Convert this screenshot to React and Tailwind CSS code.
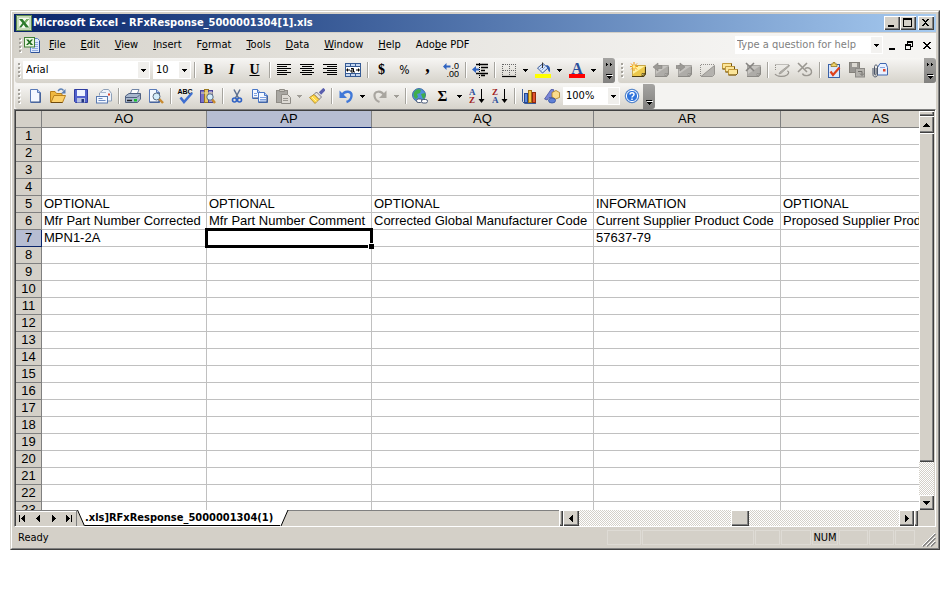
import React from "react";

const bevel =
  "bg-[#d4d0c8] shadow-[inset_1px_1px_0_#fff,inset_-1px_-1px_0_#404040,inset_-2px_-2px_0_#808080]";
const track =
  "bg-[conic-gradient(#d4d0c8_25%,#fff_0_50%,#d4d0c8_0_75%,#fff_0)] bg-[length:2px_2px]";

/* ---------- icons ---------- */

function Svg({ children, size = 16 }) {
  return (
    <svg width={size} height={size} viewBox="0 0 16 16" className="block shrink-0" aria-hidden="true">
      {children}
    </svg>
  );
}

const Page = ({ x, y, w, h, c = "#5a7ab8" }) => (
  <g>
    <path d={`M${x + 0.5} ${y + 0.5}h${w - 4}l3 3v${h - 4}h-${w - 1}z`} fill="#f4f8ff" stroke={c} />
    <path d={`M${x + w - 3.5} ${y + 0.5}v3h3`} fill="#b9cdf0" stroke={c} />
    <path d={`M${x + w - 1} ${y + 4}v${h - 5}h-${w - 2}`} fill="none" stroke="#3a5488" strokeWidth="1.2" />
  </g>
);

const Note = ({ top = "#fff0a0", fill = "#ecc84c", line = "#c8a84a", dark = "#4a3c14" }) => (
  <g>
    <path d="M2.5 3.5h13v8.500l-2.500 2.500H2.500z" fill={fill} stroke={line} />
    <path d="M3 4h12L3 12z" fill={top} />
    <path d="M2 14.500h11.500l2-2.500V5" stroke={dark} strokeWidth="1.200" fill="none" />
    <path d="M15 11.500h-3v2.500z" fill={top} stroke={dark} strokeWidth=".7" />
  </g>
);

const GrayNote = () => <Note top="#c6c4c0" fill="#aeaca8" line="#a8a6a2" dark="#8c8a86" />;

const lines = (rows) =>
  rows.map(([a, b], i) => <path key={i} d={`M${a} ${2.5 + i * 2}H${b}`} stroke="#000" />);

const icons = {
  excel: (
    <Svg>
      <rect x=".5" y=".5" width="15" height="15" fill="#e6f0dc" stroke="#5d8a4c" />
      <rect x="2" y="2" width="12" height="12" fill="#f3f8ee" stroke="#9fbf8c" />
      <path d="M3 4h3.500l2 2.600L10.800 4H13L9.600 8l3.600 4.500H9.700L7.600 9.600 5.300 12.500H3L6.400 8z" fill="#2c7a2c" />
      <path d="M11 4h2L9.600 8 8.500 6.600z" fill="#7fb56a" />
    </Svg>
  ),
  workbook: (
    <Svg>
      <path d="M6.500 1.500h7l2 2v12h-9z" fill="#dfeafc" stroke="#5b82c8" />
      <path d="M7 15.500h8.500V4" stroke="#2f5298" fill="none" />
      <path d="M8 11.500h6M8 13.500h6M11 5.500h3M11 7.500h3M11 9.500h3" stroke="#8fabdf" />
      <rect x=".5" y=".5" width="10" height="9.500" fill="#e9f5df" stroke="#3f7f35" />
      <path d="M2 2.500h2.500l1.200 1.600L7.200 2.500H9L6.600 5.200 9.200 8H6.700L5.400 6.400 3.900 8H2l2.600-2.800z" fill="#1d6b1d" />
    </Svg>
  ),
  alignLeft: <Svg>{lines([[1, 15], [1, 11], [1, 15], [1, 11], [1, 15], [1, 11]])}</Svg>,
  alignCenter: <Svg>{lines([[1, 15], [3, 13], [1, 15], [3, 13], [1, 15], [3, 13]])}</Svg>,
  alignRight: <Svg>{lines([[1, 15], [5, 15], [1, 15], [5, 15], [1, 15], [5, 15]])}</Svg>,
  merge: (
    <Svg>
      <rect x=".5" y="1.500" width="15" height="13" fill="#c3d6f0" stroke="#355a94" />
      <path d="M0 4.500h16M0 11.500h16M5.500 1v3M10.500 1v3M5.500 12v3M10.500 12v3" stroke="#355a94" />
      <rect x="1" y="5" width="14" height="6" fill="#fff" />
      <path d="M2 8h3M11 8h3" stroke="#000" />
      <path d="M3 6v4L1 8zM13 6v4l2-2z" />
      <path d="M6 6.500h2.500v3.500h-2.500v-2h2.500M9 10h1" stroke="#000" fill="none" />
    </Svg>
  ),
  indent: (
    <Svg>
      <path d="M4 2.500h12M9 5.500h7M9 8.500h4M4 11.500h12M9 13.500h4" stroke="#000" strokeWidth="1.300" />
      <path d="M7.500 1v15" stroke="#000" strokeDasharray="1 1" />
      <path d="M0 7.500 4 4v2.500h3v2H4V11z" fill="#2f63c0" />
    </Svg>
  ),
  borders: (
    <Svg>
      <path d="M1.500 2v12M14.500 2v12M8.500 2v12M2 2.500h13M2 8.500h13" stroke="#666" strokeDasharray="1 1" fill="none" />
      <path d="M1 14.500h14" stroke="#000" strokeWidth="1.200" />
    </Svg>
  ),
  fill: (
    <Svg>
      <rect y="12" width="16" height="4" fill="#ff0" />
      <path d="M2.500 6 8 1.500 13 6 7.500 11z" fill="#dce8fb" stroke="#3a5c9c" />
      <path d="M5 7l4-4M6.500 8.500l4-4" stroke="#88a8dd" />
      <path d="M7.500 6V.5" stroke="#333" />
      <path d="M11 3c3 0 4.500 2 4 7-1.600-.4-2.200-2-2.400-4z" fill="#2f5cb0" />
    </Svg>
  ),
  folderNote: (
    <Svg>
      <Note />
      <path d="M4 0v9M0 4.500h8M1 1.500l6 6M7 1.500l-6 6" stroke="#f39a15" />
      <circle cx="4" cy="4.500" r="1.500" fill="#fff08a" />
    </Svg>
  ),
  notePrev: (
    <Svg>
      <GrayNote />
      <path d="M0 5l5-4v2.500h4v3H5V9z" fill="#9c9a96" stroke="#878581" strokeWidth=".6" />
    </Svg>
  ),
  noteNext: (
    <Svg>
      <GrayNote />
      <path d="M9 5 4 1v2.500H0v3h4V9z" fill="#9c9a96" stroke="#878581" strokeWidth=".6" />
    </Svg>
  ),
  noteShow: (
    <Svg>
      <path d="M15 4v8.500L13 14.500H2z" fill="#b4b2ae" />
      <path d="M1.500 14V2.500H15" fill="none" stroke="#8f8d89" strokeDasharray="1 1" />
      <path d="M2 14.500 15.500 3.500v9l-2 2z" fill="none" stroke="#979591" />
    </Svg>
  ),
  notesAll: (
    <Svg>
      {[[0.5, 1.5], [3.5, 4.5], [6.5, 7.5]].map(([x, y]) => (
        <g key={x}>
          <path d={`M${x} ${y}h9v4l-1.500 1.500h-7.500z`} fill="#fbe59a" stroke="#c39a3c" />
          <path d={`M${x} ${y + 5.5}h7.500l1.500-1.500v-4`} fill="none" stroke="#6e5418" />
        </g>
      ))}
    </Svg>
  ),
  noteDelete: (
    <Svg>
      <GrayNote />
      <path d="M1 1l8 8M9 1L1 9" stroke="#858380" strokeWidth="1.600" />
    </Svg>
  ),
  ink: (
    <Svg>
      <path d="M1.500 2.500h13v3M1.500 3v5" stroke="#8f8c86" fill="none" strokeDasharray="1 1" />
      <path d="M15 3 6 10l-1 2 2-.6L15.500 4z" fill="#b5b2ac" stroke="#98958f" strokeWidth=".7" />
      <path d="M1 12c2 3 9 3 12 1 2.500-2 2-4 0-4" fill="none" stroke="#98958f" strokeWidth="1.200" />
    </Svg>
  ),
  inkDelete: (
    <Svg>
      <path d="M1 1l9 9M10 1L1 10" stroke="#9a9791" strokeWidth="1.600" />
      <path d="M8 6.500c4-2 7 1 6.500 4-1 4-8 4-9 1" fill="none" stroke="#9a9791" strokeWidth="1.400" />
    </Svg>
  ),
  task: (
    <Svg>
      <rect x="2.500" y="2.500" width="11" height="13" fill="#dbe8fd" stroke="#3b62a8" />
      <path d="M5 3.500V2h2V.5h2V2h2v2.500H5z" fill="#efd36c" stroke="#8a6a10" strokeWidth=".7" />
      <path d="M4.500 9.500 7 13l6.500-7.500" fill="none" stroke="#e0401c" strokeWidth="2.200" />
    </Svg>
  ),
  saveOff: (
    <Svg>
      <rect x=".5" y=".5" width="10" height="10" fill="#989692" stroke="#84817b" />
      <rect x="3" y="1" width="5" height="4" fill="#dcd9d2" />
      <rect x="6.500" y="6.500" width="9" height="8.500" fill="#b4b2ad" stroke="#8c8a86" />
      <path d="M9 9.500h4v3M13 13.500l-2-2M13 13.500l2-2" stroke="#6f6d69" fill="none" />
    </Svg>
  ),
  attach: (
    <Svg>
      <path d="M5.500 5.500 8 1.500h6l1.500 4v7.500h-10z" fill="#e8f0ff" stroke="#3f67b0" />
      <path d="M8 5.500h5" stroke="#8aa8de" />
      <rect x="11" y="7" width="2.500" height="2.500" fill="#e0442a" />
      <path d="M1 6v6.500c0 3.200 4.500 3.200 4.500 0v-8c0-2-3-2-3 0V12c0 1.200 1.600 1.200 1.600 0V6" fill="none" stroke="#4b5568" />
    </Svg>
  ),
  new: <Svg><Page x={3} y={1} w={11} h={14} /></Svg>,
  open: (
    <Svg>
      <path d="M.5 14.500v-11h4.500l1.500 2h5.500v2.500" fill="#f0b840" stroke="#b8801c" />
      <path d="M1 14.500 4 7.500h11.500l-3 7z" fill="#fcd06a" stroke="#b8801c" />
      <path d="M1 14.500h11.500" stroke="#6e4a10" />
      <path d="M8 3c2-2.500 4-2.500 5.500-.5" fill="none" stroke="#5a7fb5" strokeWidth="1.400" />
      <path d="M15.500 1v4.500H11z" fill="#5a7fb5" />
    </Svg>
  ),
  save: (
    <Svg>
      <path d="M1.500 1.500h13v13h-12l-1-1z" fill="#5262cc" stroke="#2f3ca0" />
      <rect x="4" y="2" width="8" height="6" fill="#eef3ff" />
      <rect x="4" y="10" width="8" height="4.500" fill="#b8c2e2" />
      <rect x="8.500" y="11" width="2.500" height="3.500" fill="#22357e" />
    </Svg>
  ),
  mail: (
    <Svg>
      <path d="M3.500 7.500V5l4-3.500h5l3 4v7.500h-4" fill="#eef3fb" stroke="#8fa0b8" />
      <rect x="12" y="5.500" width="2" height="2" fill="#e0442a" />
      <path d="M5 4.500h5" stroke="#a8b8d0" />
      <rect x=".5" y="8.500" width="11" height="6.500" fill="#f4f8ff" stroke="#5878b0" />
      <path d="M2.500 10.500h4M2.500 12.500h7" stroke="#6d8cc4" />
    </Svg>
  ),
  print: (
    <Svg>
      <path d="M5 6.500 7 1.500h7l-2 5z" fill="#fff" stroke="#7286a8" />
      <path d="M.5 8 4 5.500h11.500V11l-3 3.500H.5z" fill="#a9b8ce" stroke="#4f6080" />
      <path d="M1 9.500h11l3-3" stroke="#4f6080" fill="none" />
      <path d="M2 12.500h5" stroke="#222" strokeWidth="1.500" />
      <rect x="9" y="11" width="3" height="2.500" fill="#18c030" />
    </Svg>
  ),
  preview: (
    <Svg>
      <Page x={1} y={1} w={11} h={14} />
      <circle cx="8.500" cy="8.500" r="3.500" fill="#d3ecfb" stroke="#5b6b80" />
      <path d="M11.200 11 15 15" stroke="#c88a30" strokeWidth="2.500" />
    </Svg>
  ),
  spell: (
    <Svg>
      <text x="8" y="6" fontSize="7" fontWeight="700" textAnchor="middle" fontFamily="Liberation Sans, sans-serif">ABC</text>
      <path d="M3.500 9.500 7 14l8-9" fill="none" stroke="#3f6fd0" strokeWidth="2.600" />
    </Svg>
  ),
  research: (
    <Svg>
      <rect x=".5" y="2.500" width="4" height="12" fill="#7a72c8" stroke="#4a4494" />
      <rect x="4.500" y="1.500" width="4" height="13" fill="#e8c868" stroke="#9a7a20" />
      <rect x="8.500" y="2.500" width="4" height="12" fill="#9a93d8" stroke="#4a4494" />
      <path d="M1 5h12" stroke="#e8dca0" />
      <circle cx="10" cy="9" r="3.200" fill="#d3ecfb" stroke="#5b6b80" />
      <path d="M12.300 11.500 15 15" stroke="#c88a30" strokeWidth="2.400" />
    </Svg>
  ),
  cut: (
    <Svg>
      <path d="M5 1.500 9.500 10M11 1.500 6.500 10" stroke="#5d7090" strokeWidth="1.500" />
      <circle cx="5.500" cy="12" r="2" fill="none" stroke="#2f62c4" strokeWidth="1.600" />
      <circle cx="10.500" cy="12" r="2" fill="none" stroke="#2f62c4" strokeWidth="1.600" />
    </Svg>
  ),
  copy: (
    <Svg>
      <Page x={0} y={1} w={9} h={10} c="#4a78c8" />
      <Page x={6} y={4} w={10} h={11} c="#4a78c8" />
      <path d="M8 9.500h6M8 11.500h6M8 13h6M2 5.500h3M2 7.500h3" stroke="#7da0e0" />
    </Svg>
  ),
  paste: (
    <Svg>
      <rect x="1.500" y="2.500" width="11" height="12" fill="#a9a7a2" stroke="#8f8c86" />
      <path d="M4.500 3.500v-2h5v2z" fill="#c8c5be" stroke="#8f8c86" />
      <path d="M6.500 6.500h6l3 3v6h-9z" fill="#dedbd5" stroke="#8f8c86" />
      <path d="M8 10.500h5M8 12.500h5" stroke="#9a9791" />
    </Svg>
  ),
  brush: (
    <Svg>
      <path d="M15.500 1 11 5.500" stroke="#5a5fae" strokeWidth="3.200" />
      <path d="M7.500 4 12.500 9l-2.500 2.500L5 6.500z" fill="#e6e2da" stroke="#5a5a70" strokeWidth=".8" />
      <path d="M5 6.500 10 11.500 6 15.500.5 9.500z" fill="#ffd84a" stroke="#a8801c" strokeWidth=".8" />
      <path d="M3 9l4.500 4.500" stroke="#fff2a8" />
    </Svg>
  ),
  undo: (
    <Svg>
      <path d="M4 7c3-5 10-4 9.500 1-.3 3-2 5-5 6" fill="none" stroke="#4078d8" strokeWidth="2.400" />
      <path d="M1.500 2.500v7.500H9z" fill="#4078d8" />
    </Svg>
  ),
  redo: (
    <Svg>
      <path d="M12 7c-3-5-10-4-9.500 1 .3 3 2 5 5 6" fill="none" stroke="#a9a6a0" strokeWidth="2.200" />
      <path d="M14.500 2.500v7.500H7z" fill="#a9a6a0" />
    </Svg>
  ),
  globe: (
    <Svg>
      <circle cx="7" cy="7" r="6.500" fill="#4f8fdc" stroke="#2a5a98" strokeWidth=".8" />
      <path d="M3 3c2-2 4-2 6-1L8 5 5 6l1 3-2 2C1 9 1 5 3 3zM9 6l4-1c1 3 0 5-2 6z" fill="#3fae4a" />
      <rect x="4.500" y="11" width="5.500" height="3.500" rx="1.700" fill="#fff" stroke="#4a5a78" />
      <rect x="9.500" y="11.500" width="6" height="3.500" rx="1.700" fill="#fff" stroke="#4a5a78" />
    </Svg>
  ),
  chart: (
    <Svg>
      <path d="M1.500 1v12.500l2 2H15" fill="none" stroke="#3a5c9c" />
      <rect x="3.500" y="5.500" width="3" height="9" fill="#5a8ae0" stroke="#27478f" />
      <rect x="7.500" y="2.500" width="3" height="12" fill="#f5c542" stroke="#a07010" />
      <rect x="11.500" y="4.500" width="3" height="10" fill="#e2552f" stroke="#8f2a10" />
    </Svg>
  ),
  drawing: (
    <Svg>
      <path d="M.5 11 7 1.500h2.500L11 12H8.500L8 9.500H5L3 12z" fill="#7a86d8" stroke="#3c4899" strokeWidth=".7" />
      <path d="M8 4.500 12 2.500l3.500 2v5l-4 1.500L8 9z" fill="#fbdc8c" stroke="#a87a1c" strokeWidth=".8" />
      <ellipse cx="8" cy="12.500" rx="3.500" ry="2.500" fill="#5f80d6" stroke="#2e4ea0" strokeWidth=".8" />
    </Svg>
  ),
  help: (
    <Svg>
      <circle cx="8" cy="8" r="6.800" fill="#2f74dc" stroke="#5a88c8" />
      <circle cx="8" cy="8" r="5.600" fill="none" stroke="#fff" />
      <path d="M6 6.500c0-2.500 4-2.500 4 0 0 1.500-2 1.500-2 3M8 10.500v1.500" fill="none" stroke="#fff" strokeWidth="1.500" />
    </Svg>
  ),
};

/* ---------- toolbar parts ---------- */

const Down = ({ color = "#000" }) => (
  <svg width="5" height="3" viewBox="0 0 5 3" className="block shrink-0" aria-hidden="true" shapeRendering="crispEdges">
    <path d="M0 0h5v1H4v1H3v1H2V2H1V1H0z" fill={color} />
  </svg>
);

const Tri = ({ d, bar }) => (
  <svg width="9" height="9" viewBox="0 0 9 9" className="block" aria-hidden="true" shapeRendering="crispEdges">
    <path d={d} />
    {bar && <path d={bar} />}
  </svg>
);
const UP = "M4 3h1v1h1v1h1v1h1v1H1V6h1V5h1V4h1z";
const DOWN = "M1 3h7v1H7v1H6v1H5v1H4V6H3V5H2V4H1z";
const LEFT = "M6 1v7H5V7H4V6H3V5H2V4h1V3h1V2h1V1z";
const RIGHT = "M3 1v7h1V7h1V6h1V5h1V4H6V3H5V2H4V1z";

const Grip = () => (
  <svg width="8" height="16" viewBox="0 0 8 16" className="block shrink-0" aria-hidden="true" shapeRendering="crispEdges">
    {[1, 5, 9, 13].map((y) => (
      <g key={y}>
        <rect x="4" y={y + 1} width="2" height="2" fill="#fff" />
        <rect x="3" y={y} width="2" height="2" fill="#a5a29b" />
      </g>
    ))}
  </svg>
);

const Sep = () => (
  <div className="flex h-4 w-[6px] shrink-0 justify-center">
    <div className="w-px bg-[#a6a49e] shadow-[1px_0_0_#fff]" />
  </div>
);

const Btn = ({ label, children }) => (
  <button type="button" aria-label={label} className="flex h-[22px] w-[23px] shrink-0 items-center justify-center">
    {children}
  </button>
);

const Split = ({ label, off, children }) => (
  <div className="flex shrink-0">
    <Btn label={label}>{children}</Btn>
    <button type="button" aria-label={`${label} options`} className="flex h-[22px] w-[11px] items-center justify-center">
      <Down color={off ? "#a09d97" : "#000"} />
    </button>
  </div>
);

const Combo = ({ label, value, className }) => (
  <label className={`relative flex h-[18px] shrink-0 bg-white ${className}`}>
    <select aria-label={label} defaultValue={value} className="w-full appearance-none bg-transparent pl-[3px] text-[11px] leading-4 outline-none">
      <option>{value}</option>
    </select>
    <span className="pointer-events-none absolute top-px right-px bottom-px flex w-[11px] items-center justify-center bg-[#f0efec]">
      <Down />
    </span>
  </label>
);

const MoreTab = ({ chevrons }) => (
  <button
    type="button"
    aria-label="Toolbar options"
    className="-mb-px flex h-[25px] w-3 shrink-0 items-center justify-center rounded-r-[3px] bg-linear-to-b from-[#a5a4a2] to-[#82817f]"
  >
    <svg width="8" height="19" viewBox="0 0 8 19" shapeRendering="crispEdges" aria-hidden="true">
      {chevrons && <path d="M1 2h1v1h1v1H2v1H1zM5 2h1v1h1v1H6v1H5z" />}
      <path d="M1 13h6v1H1zM2 15h5v1H6v1H5v1H4v-1H3v-1H2z" fill="#000" />
      <path d="M2 14h6v1H2z" fill="#fff" />
    </svg>
  </button>
);

const Glyph = ({ children, className = "" }) => (
  <span className={`font-['Liberation_Serif',serif] leading-4 font-bold ${className}`}>{children}</span>
);

const SortIcon = ({ top, bottom, a, b }) => (
  <Svg>
    <text x="0" y="7" fontSize="9" fontWeight="700" fill={a} fontFamily="Liberation Serif, serif">{top}</text>
    <text x="0" y="15" fontSize="9" fontWeight="700" fill={b} fontFamily="Liberation Serif, serif">{bottom}</text>
    <path d="M12.500 1v12" stroke="#000" />
    <path d="M9.500 11h6l-3 4z" />
  </Svg>
);

const bar = "flex h-[25px] items-center rounded-[3px] bg-linear-to-b from-[#f7f6f4] to-[#d6d3cb] pb-px";

function Formatting() {
  return (
    <div className={bar}>
      <Grip />
      <Combo label="Font" value="Arial" className="w-[127px]" />
      <Combo label="Font size" value="10" className="ml-[3px] w-[38px]" />
      <Sep />
      <Btn label="Bold"><Glyph className="text-[14px]">B</Glyph></Btn>
      <Btn label="Italic"><Glyph className="text-[14px] italic">I</Glyph></Btn>
      <Btn label="Underline"><Glyph className="text-[14px] underline">U</Glyph></Btn>
      <Sep />
      <Btn label="Align left">{icons.alignLeft}</Btn>
      <Btn label="Center">{icons.alignCenter}</Btn>
      <Btn label="Align right">{icons.alignRight}</Btn>
      <Btn label="Merge and center">{icons.merge}</Btn>
      <Sep />
      <Btn label="Currency style"><Glyph className="text-[14px]">$</Glyph></Btn>
      <Btn label="Percent style"><span className="text-[12px]">%</span></Btn>
      <Btn label="Comma style"><Glyph className="pb-2 text-[18px]">,</Glyph></Btn>
      <Btn label="Increase decimal">
        <Svg>
          <path d="M0 4.500 3.500 1v2.500h4v2h-4V8z" fill="#2f63c0" />
          <text x="16" y="7" fontSize="9" textAnchor="end" fontFamily="Liberation Sans, sans-serif">.0</text>
          <text x="16" y="15" fontSize="9" textAnchor="end" fontFamily="Liberation Sans, sans-serif">.00</text>
        </Svg>
      </Btn>
      <Sep />
      <Btn label="Decrease indent">{icons.indent}</Btn>
      <Sep />
      <Split label="Borders">{icons.borders}</Split>
      <Split label="Fill color">{icons.fill}</Split>
      <Split label="Font color">
        <Svg>
          <text x="8" y="12" fontSize="16" fontWeight="700" textAnchor="middle" fill="#2b4f9c" fontFamily="Liberation Serif, serif">A</text>
          <rect y="12" width="16" height="4" fill="#f00" />
        </Svg>
      </Split>
      <div className="w-1" />
      <MoreTab chevrons />
    </div>
  );
}

function Reviewing() {
  return (
    <div className={`${bar} min-w-0 flex-1`}>
      <Grip />
      <Btn label="New comment">{icons.folderNote}</Btn>
      <Btn label="Previous comment">{icons.notePrev}</Btn>
      <Btn label="Next comment">{icons.noteNext}</Btn>
      <Btn label="Show comment">{icons.noteShow}</Btn>
      <Btn label="Show all comments">{icons.notesAll}</Btn>
      <Btn label="Delete comment">{icons.noteDelete}</Btn>
      <Sep />
      <Btn label="Show ink">{icons.ink}</Btn>
      <Btn label="Delete ink">{icons.inkDelete}</Btn>
      <Sep />
      <Btn label="Create task">{icons.task}</Btn>
      <Btn label="Update file">{icons.saveOff}</Btn>
      <Btn label="Send as attachment">{icons.attach}</Btn>
      <div className="flex-1" />
      <MoreTab chevrons />
    </div>
  );
}

function Standard() {
  return (
    <div className={bar}>
      <Grip />
      <Btn label="New">{icons.new}</Btn>
      <Btn label="Open">{icons.open}</Btn>
      <Btn label="Save">{icons.save}</Btn>
      <Btn label="E-mail">{icons.mail}</Btn>
      <Sep />
      <Btn label="Print">{icons.print}</Btn>
      <Btn label="Print preview">{icons.preview}</Btn>
      <Sep />
      <Btn label="Spelling">{icons.spell}</Btn>
      <Btn label="Research">{icons.research}</Btn>
      <Sep />
      <Btn label="Cut">{icons.cut}</Btn>
      <Btn label="Copy">{icons.copy}</Btn>
      <Split label="Paste" off>{icons.paste}</Split>
      <Btn label="Format painter">{icons.brush}</Btn>
      <Sep />
      <Split label="Undo">{icons.undo}</Split>
      <Split label="Redo" off>{icons.redo}</Split>
      <Sep />
      <Btn label="Insert hyperlink">{icons.globe}</Btn>
      <Split label="AutoSum">
        <Glyph className="text-[15px]">Σ</Glyph>
      </Split>
      <Btn label="Sort ascending"><SortIcon top="A" bottom="Z" a="#2b4f9c" b="#a02020" /></Btn>
      <Btn label="Sort descending"><SortIcon top="Z" bottom="A" a="#a02020" b="#2b4f9c" /></Btn>
      <Sep />
      <Btn label="Chart wizard">{icons.chart}</Btn>
      <Btn label="Drawing">{icons.drawing}</Btn>
      <Combo label="Zoom" value="100%" className="w-[57px]" />
      <Btn label="Help">{icons.help}</Btn>
      <MoreTab />
    </div>
  );
}

/* ---------- title and menu ---------- */

const windowButtons = [
  ["Minimize", "M4 9h6v2H4z"],
  ["Maximize", "M3 2h9v9H3zM4 4v6h7V4z"],
  ["Close", "M4 3h2v1h1v1h1V4h1V3h2v1h-1v1H9v1H8v1h1v1h1v1h1v1H9V9H8V8H7v1H6v1H4V9h1V8h1V7h1V6H6V5H5V4H4z"],
];

function TitleBar() {
  return (
    <header className="flex h-[18px] items-center bg-linear-to-r from-[#0a246a] to-[#a6caf0] pr-0.5 pl-0.5">
      {icons.excel}
      <h1 className="ml-px flex-1 text-[11px] leading-4 font-bold whitespace-nowrap text-white">
        Microsoft Excel - RFxResponse_5000001304[1].xls
      </h1>
      {windowButtons.map(([label, d], i) => (
        <button key={label} type="button" aria-label={label} className={`h-[14px] w-4 ${bevel} ${i === 2 ? "ml-0.5" : ""}`}>
          <svg width="16" height="14" viewBox="0 0 16 14" shapeRendering="crispEdges" aria-hidden="true">
            <path d={d} fillRule="evenodd" />
          </svg>
        </button>
      ))}
    </header>
  );
}

const menus = [
  ["", "F", "ile"],
  ["", "E", "dit"],
  ["", "V", "iew"],
  ["", "I", "nsert"],
  ["F", "o", "rmat"],
  ["", "T", "ools"],
  ["", "D", "ata"],
  ["", "W", "indow"],
  ["", "H", "elp"],
  ["Ado", "b", "e PDF"],
];

const mdiButtons = [
  ["Minimize workbook", "M3 8h6v2H3z"],
  ["Restore workbook", "M3 1h6v6H7V6h1V3H4v1H3zM1 4h6v6H1zM2 6v3h4V6z"],
  ["Close workbook", "M1 2h2v1h1v1h2V3h1V2h2v1H8v1H7v1H6v1h1v1h1v1h1v1H7V8H6V7H4v1H3v1H1V8h1V7h1V6h1V5H3V4H2V3H1z"],
];

function MenuBar() {
  return (
    <nav className="mt-px flex h-[25px] items-center bg-linear-to-r from-[#d6d3cb] to-[#f5f4f2] to-80% pb-px pl-0.5">
      <Grip />
      {icons.workbook}
      <div className="flex flex-1 pl-px">
        {menus.map(([a, u, b]) => (
          <button key={u + b} type="button" className="pr-[7px] pl-2 text-[11px] leading-4 whitespace-nowrap">
            {a}
            <span className="underline">{u}</span>
            {b}
          </button>
        ))}
      </div>
      <div className="flex h-[18px] w-[148px] items-center bg-white">
        <input
          type="text"
          aria-label="Type a question for help"
          placeholder="Type a question for help"
          className="min-w-0 flex-1 pl-[2px] text-[11px] leading-4 outline-none placeholder:text-[#808080]"
        />
        <button type="button" aria-label="Recent questions" className="mr-px flex h-4 w-[11px] items-center justify-center bg-[#f3f2f0]">
          <Down />
        </button>
      </div>
      <div className="flex gap-2 pr-1 pl-[3px]">
        {mdiButtons.map(([label, d]) => (
          <button key={label} type="button" aria-label={label}>
            <svg width="10" height="11" viewBox="0 0 10 11" className="block" shapeRendering="crispEdges" aria-hidden="true">
              <path d={d} fillRule="evenodd" />
            </svg>
          </button>
        ))}
      </div>
    </nav>
  );
}

/* ---------- sheet ---------- */

const columns = ["AO", "AP", "AQ", "AR", "AS"];
const cells = {
  5: ["OPTIONAL", "OPTIONAL", "OPTIONAL", "INFORMATION", "OPTIONAL"],
  6: [
    "Mfr Part Number Corrected",
    "Mfr Part Number Comment",
    "Corrected Global Manufacturer Code",
    "Current Supplier Product Code",
    "Proposed Supplier Product Code",
  ],
  7: ["MPN1-2A", "", "", "57637-79", ""],
};
const active = { row: 7, col: 1 };
const rows = Array.from({ length: 23 }, (_, i) => i + 1);

const head = "h-[17px] border-r border-b p-0 text-center font-normal";
const headOff = "border-[#808080] bg-[#d4d0c8]";

function Grid() {
  return (
    <div className="min-w-0 flex-1 overflow-hidden bg-white">
      <table className="w-[965px] table-fixed border-separate border-spacing-0 font-['Liberation_Sans',Arial,sans-serif] text-[13px] leading-4">
        <colgroup>
          <col className="w-[26px]" />
          <col className="w-[165px]" />
          <col className="w-[165px]" />
          <col className="w-[222px]" />
          <col className="w-[187px]" />
          <col className="w-[200px]" />
        </colgroup>
        <thead>
          <tr>
            <td className={`${head} ${headOff}`} />
            {columns.map((name, c) => (
              <th
                key={name}
                scope="col"
                className={`${head} ${c === active.col ? "border-r-[#808080] border-b-[#0a246a] bg-[#b6bdd2]" : headOff}`}
              >
                {name}
              </th>
            ))}
          </tr>
        </thead>
        <tbody>
          {rows.map((r) => (
            <tr key={r}>
              <th
                scope="row"
                className={`${head} ${r === active.row ? "border-[#0a246a] bg-[#b6bdd2]" : headOff}`}
              >
                {r}
              </th>
              {columns.map((name, c) => (
                <td key={name} className="relative h-[17px] border-r border-b border-[#c0c0c0] p-0 pl-0.5 whitespace-nowrap">
                  {cells[r]?.[c]}
                  {r === active.row && c === active.col && (
                    <span className="absolute -top-0.5 -right-0.5 -bottom-0.5 -left-0.5 z-10 border-3 border-black">
                      <span className="absolute -right-1 -bottom-1 size-[6px] border-t border-l border-white bg-black" />
                    </span>
                  )}
                </td>
              ))}
            </tr>
          ))}
        </tbody>
      </table>
    </div>
  );
}

function VerticalScroll() {
  return (
    <div className="mr-px flex w-[15px] shrink-0 flex-col bg-[#d4d0c8]">
      <div className={`h-[5px] ${bevel}`} />
      <button type="button" aria-label="Scroll up" className={`flex h-[17px] items-center justify-center ${bevel}`}>
        <Tri d={UP} />
      </button>
      <div className={`flex-1 ${track}`}>
        <div className={`h-[91%] ${bevel}`} />
      </div>
      <button type="button" aria-label="Scroll down" className={`flex h-[15px] items-center justify-center ${bevel}`}>
        <Tri d={DOWN} />
      </button>
    </div>
  );
}

const navButtons = [
  ["First sheet", "M6 1v7H5V7H4V6H3V5H2V4h1V3h1V2h1V1z", "M0 1h1v7H0z"],
  ["Previous sheet", LEFT],
  ["Next sheet", RIGHT],
  ["Last sheet", "M2 1v7h1V7h1V6h1V5h1V4H5V3H4V2H3V1z", "M7 1h1v7H7z"],
];

function SheetTabs() {
  return (
    <div className="flex h-4">
      <div className="flex w-[543px] shrink-0 border-t border-[#808080]">
        <div className="flex border-r border-[#808080]">
          {navButtons.map(([label, d, b]) => (
            <button key={label} type="button" aria-label={label} className="flex h-[15px] w-[15px] items-center justify-center shadow-[inset_0_1px_0_#fff]">
              <Tri d={d} bar={b} />
            </button>
          ))}
        </div>
        <button type="button" className="-mt-px flex h-4 text-[11px] leading-4 font-bold whitespace-nowrap">
          <svg width="8" height="16" viewBox="0 0 8 16" className="block" aria-hidden="true">
            <path d="M0 0h8v16z" fill="#fff" />
            <path d="M.5 0l7 16" stroke="#000" />
          </svg>
          <span className="border-b border-black bg-white pr-[7px]">.xls]RFxResponse_5000001304(1)</span>
          <svg width="11" height="16" viewBox="0 0 11 16" className="block" aria-hidden="true">
            <path d="M0 0h8L1 16H0z" fill="#fff" />
            <path d="M8 0 1 16" stroke="#000" />
          </svg>
        </button>
      </div>
      <div className={`w-1 ${bevel}`} />
      <button type="button" aria-label="Scroll left" className={`flex w-4 items-center justify-center ${bevel}`}>
        <Tri d={LEFT} />
      </button>
      <div className={`flex flex-1 ${track}`}>
        <div className="w-[47.5%]" />
        <div className={`w-[18px] ${bevel}`} />
      </div>
      <button type="button" aria-label="Scroll right" className={`flex w-[15px] items-center justify-center ${bevel}`}>
        <Tri d={RIGHT} />
      </button>
      <div className={`mr-px w-1 ${bevel}`} />
      <div className="w-4" />
    </div>
  );
}

const box = "h-[15px] border border-[#dedbd5]";

function StatusBar() {
  return (
    <footer className="flex h-[21px] items-center gap-px pl-1 text-[11px] leading-4">
      <span className="flex-1">Ready</span>
      <div className={`${box} w-[34px]`} />
      <div className={`${box} w-[112px]`} />
      <div className={`${box} w-[25px]`} />
      <div className={`${box} w-[30px]`} />
      <div className={`${box} flex w-[26px] items-center justify-center`}>NUM</div>
      <div className={`${box} w-[29px]`} />
      <div className={`${box} w-[25px]`} />
      <div className={`${box} w-5`} />
      <svg width="20" height="20" viewBox="0 0 20 20" className="block" aria-hidden="true">
        <path d="M7 18.500 19.500 6M11 18.500 19.500 10M15 18.500l4.500-4.500" stroke="#808080" strokeWidth="1.500" />
        <path d="M6 18 19 5M10 18l9-9M14 18l5-5" stroke="#fff" />
      </svg>
    </footer>
  );
}

export default function App() {
  return (
    <div className="min-h-screen bg-white p-[10px] font-['DejaVu_Sans_Condensed','DejaVu_Sans',Tahoma,sans-serif] text-black">
      <div className="border border-t-[#d4d0c8] border-r-[#404040] border-b-[#404040] border-l-[#d4d0c8]">
        <main className="border border-t-white border-r-[#808080] border-b-[#808080] border-l-white bg-[#d4d0c8] px-0.5 pt-0.5">
          <TitleBar />
          <MenuBar />
          <div className="bg-[#f4f3f1] pl-px">
            <div className="flex gap-[3px]">
              <Formatting />
              <Reviewing />
            </div>
            <div className="mt-px flex">
              <Standard />
            </div>
          </div>
          <section className="border-t border-r border-b border-l border-t-[#808080] border-r-white border-b-white border-l-[#808080]">
            <div className="border-t border-l border-[#404040]">
              <div className="flex h-[399px]">
                <Grid />
                <VerticalScroll />
              </div>
              <SheetTabs />
            </div>
          </section>
          <StatusBar />
        </main>
      </div>
    </div>
  );
}
